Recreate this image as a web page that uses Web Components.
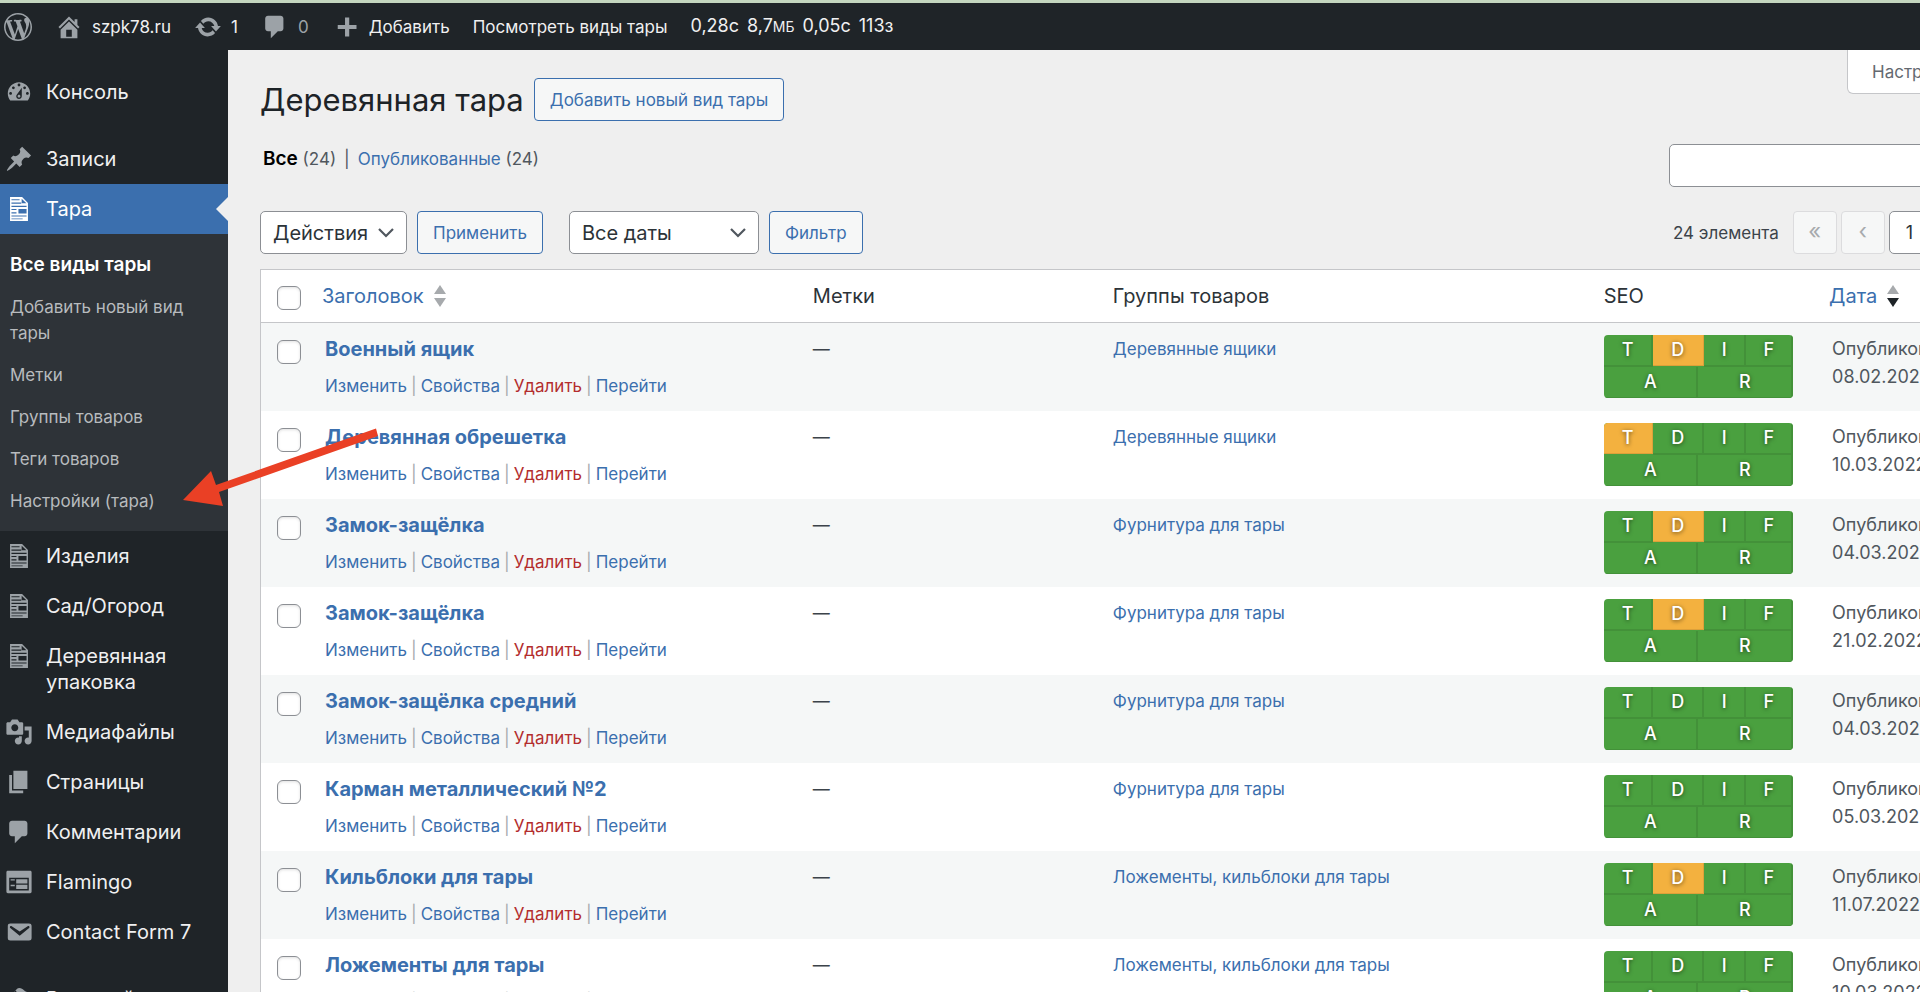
<!DOCTYPE html>
<html lang="ru">
<head>
<meta charset="utf-8">
<title>Деревянная тара — szpk78.ru</title>
<style>
  html, body { margin: 0; height: 100%; overflow: hidden; }
  body {
    font-family: Inter, "Noto Sans", sans-serif;
    font-size: 17px;
    line-height: 26px;
    color: #3c434a;
    background: #efefef;
    --blue: #3b6fae;
    --green: #4aa03f;
    --orange: #f3b13f;
  }
</style>
</head>
<body>
<admin-shell>
  <admin-bar slot="bar">
    <bar-item icon="wordpress" label="О WordPress"></bar-item>
    <bar-item icon="home">szpk78.ru</bar-item>
    <bar-item icon="update">1</bar-item>
    <bar-item icon="comments" muted>0</bar-item>
    <bar-item icon="plus">Добавить</bar-item>
    <bar-item>Посмотреть виды тары</bar-item>
    <query-stats></query-stats>
  </admin-bar>
  <side-menu slot="menu">
    <menu-item icon="dashboard">Консоль</menu-item>
    <menu-gap></menu-gap>
    <menu-item icon="pin">Записи</menu-item>
    <menu-item icon="doc" current>Тара
      <sub-item slot="sub" current>Все виды тары</sub-item>
      <sub-item slot="sub">Добавить новый вид тары</sub-item>
      <sub-item slot="sub">Метки</sub-item>
      <sub-item slot="sub">Группы товаров</sub-item>
      <sub-item slot="sub">Теги товаров</sub-item>
      <sub-item slot="sub">Настройки (тара)</sub-item>
    </menu-item>
    <menu-item icon="doc">Изделия</menu-item>
    <menu-item icon="doc">Сад/Огород</menu-item>
    <menu-item icon="doc">Деревянная упаковка</menu-item>
    <menu-item icon="media">Медиафайлы</menu-item>
    <menu-item icon="pages">Страницы</menu-item>
    <menu-item icon="comments">Комментарии</menu-item>
    <menu-item icon="form">Flamingo</menu-item>
    <menu-item icon="email">Contact Form 7</menu-item>
    <menu-gap></menu-gap>
    <menu-item icon="brush">Внешний вид</menu-item>
  </side-menu>
  <post-list></post-list>
</admin-shell>
<callout-arrow></callout-arrow>

<script>
const ICONS = {
  wordpress: '<path d="M20 10c0-5.51-4.49-10-10-10C4.48 0 0 4.49 0 10c0 5.52 4.48 10 10 10 5.51 0 10-4.48 10-10zM7.78 15.37L4.37 6.22c.55-.02 1.17-.08 1.17-.08.5-.06.44-1.13-.06-1.11 0 0-1.45.11-2.37.11-.18 0-.37 0-.58-.01C4.12 2.69 6.87 1.11 10 1.11c2.33 0 4.45.87 6.05 2.34-.68-.11-1.65.39-1.65 1.58 0 .74.45 1.36.9 2.1.35.61.55 1.36.55 2.46 0 1.49-1.4 5-1.4 5l-3.03-8.37c.54-.02.82-.17.82-.17.5-.05.44-1.25-.06-1.22 0 0-1.44.12-2.38.12-.87 0-2.33-.12-2.33-.12-.5-.03-.56 1.2-.06 1.22l.92.08 1.26 3.41zM17.41 10c.24-.64.74-1.87.43-4.25.7 1.29 1.05 2.71 1.05 4.25 0 3.29-1.73 6.24-4.4 7.78.97-2.59 1.94-5.2 2.92-7.78zM6.1 18.09C3.12 16.65 1.11 13.53 1.11 10c0-1.3.23-2.48.72-3.59C3.25 10.3 4.67 14.2 6.1 18.09zm4.03-6.63l2.58 6.98c-.86.29-1.76.45-2.71.45-.79 0-1.57-.11-2.29-.33.81-2.38 1.62-4.74 2.42-7.1z"/>',
  home: '<path d="M16 8.5l1.53 1.53-1.06 1.06L10 4.6l-6.47 6.49-1.06-1.06L10 2.5l4 4v-2h2v4zm-6-2.46l6 5.99V18H4v-5.97zM12 17v-5H8v5h4z"/>',
  update: '<path d="M10.2 3.28c3.53 0 6.43 2.61 6.92 6h2.08l-3.5 4-3.5-4h2.32c-.45-1.97-2.21-3.45-4.32-3.45-1.45 0-2.73.71-3.54 1.78L4.95 5.66C6.23 4.2 8.11 3.28 10.2 3.28zm-.4 13.44c-3.52 0-6.43-2.61-6.92-6H.8l3.5-4c1.17 1.33 2.33 2.67 3.5 4H5.48c.45 1.97 2.21 3.45 4.32 3.45 1.45 0 2.73-.71 3.54-1.78l1.71 1.95c-1.28 1.46-3.15 2.38-5.25 2.38z"/>',
  comments: '<path d="M5 2h9c1.1 0 2 .9 2 2v7c0 1.1-.9 2-2 2h-2l-5 5v-5H5c-1.1 0-2-.9-2-2V4c0-1.1.9-2 2-2z"/>',
  plus: '<path d="M17.5 8.5v3h-5.2v5.2h-3v-5.2H4.1v-3h5.2V3.3h3v5.2z"/>',
  dashboard: '<path d="M3.76 16h12.48c1.1-1.37 1.76-3.11 1.76-5 0-4.42-3.58-8-8-8s-8 3.58-8 8c0 1.89.66 3.63 1.76 5zM10 4c.55 0 1 .45 1 1s-.45 1-1 1-1-.45-1-1 .45-1 1-1zM6 6c.55 0 1 .45 1 1s-.45 1-1 1-1-.45-1-1 .45-1 1-1zm8 0c.55 0 1 .45 1 1s-.45 1-1 1-1-.45-1-1 .45-1 1-1zm-5.37 5.55L12 7v6c0 1.1-.9 2-2 2s-2-.9-2-2c0-.57.24-1.08.63-1.45zM4 10c.55 0 1 .45 1 1s-.45 1-1 1-1-.45-1-1 .45-1 1-1zm12 0c.55 0 1 .45 1 1s-.45 1-1 1-1-.45-1-1 .45-1 1-1zm-5 3c0-.55-.45-1-1-1s-1 .45-1 1 .45 1 1 1 1-.45 1-1z"/>',
  pin: '<path d="M10.44 3.02l1.82-1.82 6.36 6.35-1.83 1.82c-1.05-.68-2.48-.57-3.41.36l-.75.75c-.92.93-1.04 2.35-.35 3.41l-1.83 1.82-2.41-2.41-2.8 2.79c-.42.42-3.38 2.71-3.8 2.29s1.86-3.39 2.28-3.81l2.79-2.79L4.1 9.36l1.83-1.82c1.05.69 2.48.57 3.4-.36l.75-.75c.93-.92 1.05-2.35.36-3.41z"/>',
  doc: '<path fill-rule="evenodd" d="M3.6 1.5h8.6l4.2 4.2v12.8H3.6zM4.6 3v.8h5.8V3zM4.6 5.3v.9h7V5.3zM11.9 2.6v3.3h3.4zM4.6 7.7v.9h10.8v-.9zM4.6 10v.8h3.6V10zM9.6 10v3.2h5.8V10zM4.6 12.4v.8h3.6v-.8zM4.6 14.6v.8h10.8v-.8zM4.6 16.7v.7h8v-.7z"/>',
  media: '<path d="M13 11V4c0-.55-.45-1-1-1h-1.67L9 1H5L3.67 3H2c-.55 0-1 .45-1 1v7c0 .55.45 1 1 1h10c.55 0 1-.45 1-1zM7 4.5c1.38 0 2.5 1.12 2.5 2.5S8.38 9.5 7 9.5 4.5 8.38 4.5 7 5.62 4.5 7 4.5zM14 6h5v10.5c0 1.38-1.12 2.5-2.5 2.5S14 17.88 14 16.5s1.12-2.5 2.5-2.5c.17 0 .34.02.5.05V9h-3V6zm-4 8.05V13h2v3.5c0 1.38-1.12 2.5-2.5 2.5S7 17.88 7 16.5 8.12 14 9.5 14c.17 0 .34.02.5.05z"/>',
  pages: '<path d="M6 15V2h10v13H6zm-1 1h8v2H3V5h2v11z"/>',
  form: '<path d="M2 2h16c.55 0 1 .45 1 1v14c0 .55-.45 1-1 1H2c-.55 0-1-.45-1-1V3c0-.55.45-1 1-1zm15 14V7H3v9h14zM4 8v1h3V8H4zm4 0v3h8V8H8zm-4 4v1h3v-1H4zm4 0v3h8v-3H8z"/>',
  email: '<path d="M3.87 4h13.25C18.37 4 19 4.59 19 5.79v8.42c0 1.19-.63 1.79-1.88 1.79H3.87c-1.25 0-1.88-.6-1.88-1.79V5.79c0-1.2.63-1.79 1.88-1.79zm6.62 8.6l6.74-5.53c.24-.2.43-.66.13-1.07-.29-.41-.82-.42-1.17-.17l-5.7 3.86L4.8 5.83c-.35-.25-.88-.24-1.17.17-.3.41-.11.87.13 1.07z"/>',
  brush: '<path d="M14.48 11.06L7.41 3.99l1.5-1.5c.5-.56 2.3-.47 3.51.32 1.21.8 1.43 1.28 2.91 2.1 1.18.64 2.45 1.26 4.45.85zm-.71.71L6.7 4.7 4.93 6.47c-.39.39-.39 1.02 0 1.41l1.06 1.06c.39.39.39 1.03 0 1.42-.6.6-1.43 1.11-2.21 1.69-.35.26-.7.53-1.01.84C1.43 14.23.4 16.08 1.4 17.07c.99 1 2.84-.03 4.18-1.36.31-.31.58-.66.85-1.02.57-.78 1.08-1.61 1.69-2.21.39-.39 1.02-.39 1.41 0l1.06 1.06c.39.39 1.02.39 1.41 0z"/>'
};

function define(name, render) {
  customElements.define(name, class extends HTMLElement {
    constructor() {
      super();
      this.attachShadow({ mode: 'open' });
    }
    connectedCallback() {
      this.shadowRoot.innerHTML = render(this);
    }
  });
}

define('dash-icon', el => `
  <style>
    :host { display: block; flex: none; width: 28px; height: 28px; }
    svg { display: block; width: 100%; height: 100%; fill: currentColor; }
  </style>
  <svg viewBox="0 0 20 20" aria-hidden="true">${ICONS[el.getAttribute('name')]}</svg>`);

define('admin-shell', () => `
  <style>
    :host { display: grid; grid-template: auto 1fr / 228px minmax(0, 1fr); height: 100vh; overflow: hidden; }
    .bar { grid-column: 1 / 3; }
    .menu { background: #1f2428; }
    main, .menu { min-height: 0; overflow: hidden; }
  </style>
  <header class="bar"><slot name="bar"></slot></header>
  <nav class="menu"><slot name="menu"></slot></nav>
  <main><slot></slot></main>`);

define('admin-bar', () => `
  <style>
    :host {
      display: flex; align-items: center; gap: 23px; height: 47px; padding-left: 4px;
      border-top: 3px solid #c4d6bf; background: #1f2428; color: #f0f0f1; white-space: nowrap;
    }
  </style>
  <slot></slot>`);

define('bar-item', el => `
  <style>
    :host { display: block; }
    a { display: flex; align-items: center; gap: 9px; color: inherit; text-decoration: none; }
    :host([muted]) span { color: #9ca2a7; }
    dash-icon { color: #9ca2a7; }
  </style>
  <a href="#"${el.hasAttribute('label') ? ` aria-label="${el.getAttribute('label')}"` : ''}>
    ${el.hasAttribute('icon') ? `<dash-icon name="${el.getAttribute('icon')}"></dash-icon>` : ''}
    ${el.textContent.trim() ? '<span><slot></slot></span>' : ''}
  </a>`);

define('query-stats', () => `
  <style>
    :host { display: block; }
    a { display: flex; gap: 8px; color: inherit; text-decoration: none; font-size: 18px; }
    small { font-size: 14px; }
  </style>
  <a href="#"><span>0,28с</span><span>8,7<small>МБ</small></span><span>0,05с</span><span>113з</span></a>`);

define('side-menu', () => `
  <style>
    :host { display: block; padding-top: 17px; color: #f0f0f1; font-size: 20px; }
  </style>
  <slot></slot>`);

define('menu-gap', () => `<style>:host { display: block; height: 17px; }</style>`);

define('menu-item', el => `
  <style>
    :host { display: block; }
    a { position: relative; display: flex; gap: 13px; padding: 12px 30px 12px 5px; color: inherit; text-decoration: none; }
    dash-icon { color: #9ca2a7; height: 28px; margin: -1px 0; }
    :host([current]) a { background: var(--blue); color: #fff; }
    :host([current]) dash-icon { color: #fff; }
    :host([current]) a::after {
      content: ""; position: absolute; right: 0; top: 13px;
      border: 12px solid transparent; border-left: 0; border-right-color: #efefef;
    }
    .sub { padding: 10px 0 9px; background: #2e3338; }
  </style>
  <a href="#"><dash-icon name="${el.getAttribute('icon')}"></dash-icon><span><slot></slot></span></a>
  ${el.querySelector('[slot=sub]') ? '<div class="sub"><slot name="sub"></slot></div>' : ''}`);

define('sub-item', () => `
  <style>
    :host { display: block; font-size: 17px; }
    a { display: block; padding: 8px 30px 8px 10px; color: #b8bbbe; text-decoration: none; }
    :host([current]) a { color: #fff; font-weight: 600; font-size: 19px; }
  </style>
  <a href="#"><slot></slot></a>`);

define('seo-score', el => {
  const warn = el.getAttribute('warn');
  const cell = l => `<span class="${l === warn ? 'warn' : ''}">${l}</span>`;
  return `
  <style>
    :host {
      display: block; width: 189px; overflow: hidden; border-radius: 4px; background: var(--green);
      color: #fff; font-size: 18px; font-weight: 500; line-height: 30px; text-align: center; text-shadow: 0 1px 4px rgba(0,0,0,.6);
    }
    div { display: grid; }
    .top { grid-template-columns: 49fr 51fr 42fr 47fr; }
    .bottom { grid-template-columns: 1fr 1fr; }
    span { border: solid #439139; border-width: 0 1px 1px 0; box-shadow: inset -1px 0 #439139; }
    .top span { border-bottom-width: 2px; }
    .top .warn { background: var(--orange); border-color: #dca03a; border-bottom-width: 1px; margin-bottom: 1px; box-shadow: none; }
  </style>
  <div class="top">${['T', 'D', 'I', 'F'].map(cell).join('')}</div>
  <div class="bottom">${['A', 'R'].map(cell).join('')}</div>`;
});

define('sort-arrows', () => `
  <style>
    :host { display: inline-grid; gap: 4px; }
    i { border: solid transparent; border-width: 0 6px; }
    .up { border-bottom: 9px solid #a7aaad; }
    .down { border-top: 9px solid #a7aaad; }
    :host([desc]) .down { border-top-color: #1d2327; }
  </style>
  <i class="up"></i><i class="down"></i>`);

define('action-button', () => `
  <style>
    :host { display: block; flex: none; }
    button {
      box-sizing: border-box; height: 43px; padding: 0 15px; border: 1px solid var(--blue); border-radius: 4px;
      background: #f6f7f7; color: var(--blue); font: inherit; white-space: nowrap;
    }
  </style>
  <button type="button"><slot></slot></button>`);

const ROWS = [
  ['Военный ящик', 'Деревянные ящики', 'D', '08.02.2022'],
  ['Деревянная обрешетка', 'Деревянные ящики', 'T', '10.03.2022'],
  ['Замок-защёлка', 'Фурнитура для тары', 'D', '04.03.2022'],
  ['Замок-защёлка', 'Фурнитура для тары', 'D', '21.02.2022'],
  ['Замок-защёлка средний', 'Фурнитура для тары', '', '04.03.2022'],
  ['Карман металлический №2', 'Фурнитура для тары', '', '05.03.2022'],
  ['Кильблоки для тары', 'Ложементы, кильблоки для тары', 'D', '11.07.2022'],
  ['Ложементы для тары', 'Ложементы, кильблоки для тары', '', '10.03.2022']
];

define('post-table', () => `
  <style>
    :host { display: block; }
    table {
      width: 100%; table-layout: fixed; border: 1px solid #c5c6c9; border-spacing: 0; border-collapse: separate;
      background: #fff; line-height: 28px;
    }
    .cb { width: 50px; } .title { width: 27%; } .tags { width: 16.5%; } .groups { width: 27%; } .seo { width: 12.4%; }
    th { padding: 12px 11px; border-bottom: 1px solid #c5c6c9; font-size: 20px; font-weight: 400; text-align: left; color: #2c3338; white-space: nowrap; }
    th a { display: flex; align-items: center; gap: 10px; }
    td { box-sizing: border-box; height: 88px; padding: 12px 11px 0; vertical-align: top; white-space: nowrap; }
    tbody tr:nth-child(odd) { background: #f5f7f7; }
    a { color: var(--blue); text-decoration: none; }
    td.name { padding-left: 14px; }
    td.name > a { font-size: 20px; font-weight: 700; }
    td.date { padding-left: 14px; color: #50575e; font-size: 18px; }
    nav { margin-top: 8px; color: #a7aaad; }
    nav span { margin: 0 4px; }
    nav .trash { color: #b32d2e; }
    input {
      display: block; appearance: none; box-sizing: border-box; width: 24px; height: 24px; margin: 5px 0 0 5px;
      border: 1px solid #8c8f94; border-radius: 6px; background: #fff; box-shadow: inset 0 1px 3px rgba(0,0,0,.12);
    }
    th input { margin-top: 4px; }
  </style>
  <table>
    <colgroup><col class="cb"><col class="title"><col class="tags"><col class="groups"><col class="seo"><col></colgroup>
    <thead><tr>
      <th><input type="checkbox" aria-label="Выделить все"></th>
      <th><a href="#">Заголовок<sort-arrows></sort-arrows></a></th>
      <th>Метки</th><th>Группы товаров</th><th>SEO</th>
      <th><a href="#">Дата<sort-arrows desc></sort-arrows></a></th>
    </tr></thead>
    <tbody>${ROWS.map(([name, group, warn, date]) => `
      <tr>
        <td><input type="checkbox" aria-label="Выбрать ${name}"></td>
        <td class="name"><a href="#">${name}</a>
          <nav><a href="#">Изменить</a><span>|</span><a href="#">Свойства</a><span>|</span><a href="#" class="trash">Удалить</a><span>|</span><a href="#">Перейти</a></nav>
        </td>
        <td>—</td>
        <td><a href="#">${group}</a></td>
        <td><seo-score warn="${warn}"></seo-score></td>
        <td class="date">Опубликовано<br>${date}</td>
      </tr>`).join('')}
    </tbody>
  </table>`);

define('post-list', () => `
  <style>
    /* The list is wider than the window; its right part runs past the edge. */
    :host { display: block; width: calc(100% + 160px); }
    .wrap { padding-left: 32px; }
    .row { display: flex; justify-content: space-between; align-items: flex-start; }
    .head { display: flex; align-items: center; gap: 10px; padding-top: 28px; }
    h1 { margin: 0; font-size: 31px; line-height: 43px; font-weight: 400; color: #1d2327; white-space: nowrap; }
    .screen {
      box-sizing: border-box; width: 233px; height: 44px; padding: 0 24px; border: 1px solid #c5c6c9; border-top: 0;
      border-radius: 0 0 0 6px; background: #fff; color: #646970; font: inherit; text-align: left; white-space: nowrap;
    }
    .views { margin-top: 23px; }
    ul { display: flex; margin: 0; padding: 2px 3px; list-style: none; color: #50575e; font-size: 17px; }
    li a { color: var(--blue); text-decoration: none; }
    li a.all { color: #000; font-weight: 600; font-size: 19px; }
    li + li::before { content: "|"; margin: 0 8px; }
    input, select {
      box-sizing: border-box; height: 43px; border: 1px solid #8c8f94; border-radius: 5px; background: #fff;
      color: #2c3338; font: inherit; font-size: 20px; margin: 0;
    }
    .search { width: 411px; }
    .nav { margin: 24px 0 15px; }
    .tools, .pages { display: flex; align-items: center; }
    .tools { gap: 10px; }
    .tools .gap { margin-left: 16px; }
    select {
      appearance: none; width: 147px; padding: 0 30px 0 12px;
      background: #fff url('data:image/svg+xml,<svg xmlns="http://www.w3.org/2000/svg" width="16" height="10" fill="none" stroke="%2350575e" stroke-width="2.2"><path d="M1 1l7 7 7-7"/></svg>') no-repeat right 12px center;
    }
    select.dates { width: 190px; }
    .pages { width: 407px; gap: 4px; }
    .pages span { margin-right: 10px; }
    .pages button {
      width: 44px; height: 43px; padding: 0 0 4px; border: 1px solid #dcdcde; border-radius: 4px;
      background: #f6f7f7; color: #a7aaad; font: inherit; font-size: 22px;
    }
    .pages input { width: 60px; padding: 0 16px; font-size: 18px; }
  </style>
  <div class="wrap">
    <div class="row">
      <div class="head"><h1>Деревянная тара</h1><action-button>Добавить новый вид тары</action-button></div>
      <button class="screen" type="button">Настройки экрана</button>
    </div>
    <div class="row views">
      <ul>
        <li><a href="#" class="all">Все</a> (24)</li>
        <li><a href="#">Опубликованные</a> (24)</li>
      </ul>
      <input class="search" type="search" aria-label="Поиск видов тары">
    </div>
    <div class="row nav">
      <div class="tools">
        <select aria-label="Действия"><option>Действия</option></select>
        <action-button>Применить</action-button>
        <select class="dates gap" aria-label="Фильтр по дате"><option>Все даты</option></select>
        <action-button>Фильтр</action-button>
      </div>
      <div class="pages">
        <span>24 элемента</span>
        <button type="button" disabled>«</button>
        <button type="button" disabled>‹</button>
        <input type="text" value="1" aria-label="Текущая страница">
      </div>
    </div>
    <post-table></post-table>
  </div>`);

define('callout-arrow', () => `
  <style>
    :host { position: absolute; left: 183px; top: 428px; width: 196px; height: 80px; pointer-events: none; }
    svg { display: block; }
  </style>
  <svg width="196" height="80" fill="#ea4025" aria-hidden="true"><path d="M0 72L28 43L33 57L193 0.500L195 8L36 64L40 78Z"/></svg>`);
</script>
</body>
</html>
